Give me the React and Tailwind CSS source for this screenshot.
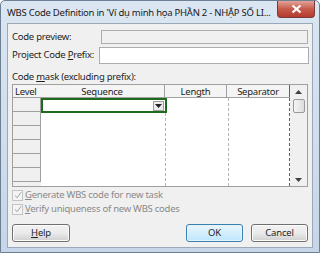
import React from "react";

const font = { fontFamily: '"Noto Sans", "Open Sans", sans-serif' };

function Btn({ children, primary, className = "" }) {
  return (
    <div
      className={
        "h-[18px] rounded-[3px] border flex items-center justify-center text-[9.5px] tracking-[-0.2px] text-[#1e1e1e] " +
        (primary
          ? "border-[#3c7fb1] bg-gradient-to-b from-[#eaf6fd] to-[#bee6fd] shadow-[inset_0_0_0_1px_#e5f4fc] "
          : "border-[#707070] bg-gradient-to-b from-[#f2f2f2] via-[#ebebeb] to-[#cfcfcf] shadow-[inset_0_0_0_1px_#fcfcfc] ") +
        className
      }
    >
      {children}
    </div>
  );
}

function Check({ u, rest }) {
  return (
    <div className="flex items-center h-[14px] text-[#8a8a8a] whitespace-nowrap">
      <div className="w-[11px] h-[11px] border border-[#c4c4c4] bg-[#f4f4f4] flex items-center justify-center mr-[2px]">
        <svg width="8" height="8" viewBox="0 0 9 9">
          <path d="M1 5 L3.5 7.5 L8 1.5" stroke="#a0a0a0" strokeWidth="1.1" fill="none" />
        </svg>
      </div>
      <span>
        <span className="underline">{u}</span>
        {rest}
      </span>
    </div>
  );
}

export default function App() {
  const rows = [0, 1, 2, 3, 4, 5];
  return (
    <div
      className="w-[320px] h-[253px] overflow-hidden flex flex-col bg-gradient-to-b from-[#dbe6f2] to-[#c6d6e8] border border-[#6d7f93] rounded-t-[5px] text-[9.5px] tracking-[-0.25px]"
      style={font}
    >
      {/* title bar */}
      <div className="h-[22px] flex items-start shrink-0">
        <div className="pl-[6px] pt-[5px] text-[#1a1a1a] whitespace-nowrap flex-1 min-w-0 overflow-hidden">
          WBS Code Definition in 'Ví dụ minh họa PHẦN 2 - NHẬP SỐ LI...
        </div>
        <div className="shrink-0 w-[38px] h-[17px] mr-[4px] rounded-b-[4px] border border-t-0 border-[#7b3b3b] bg-gradient-to-b from-[#e0a398] via-[#c75a4c] to-[#b33a2c] flex items-center justify-center">
          <svg width="11" height="10" viewBox="0 0 11 10">
            <path d="M1.5 1.5 L9.5 8.5 M9.5 1.5 L1.5 8.5" stroke="#fff" strokeWidth="2.2" />
          </svg>
        </div>
      </div>

      {/* client area */}
      <div className="mx-[6px] mb-[4px] flex-1 bg-[#f0f0f0] border border-[#9aa8b8] flex flex-col px-[4px] text-[#1e1e1e] whitespace-nowrap">
        <div className="flex items-center mt-[6px] h-[14px]">
          <span className="w-[85px]">Code preview:</span>
          <div className="flex-1 h-[14px] border border-[#adadad] bg-[#f0f0f0] ml-[4px]" />
        </div>
        <div className="flex items-center mt-[3px] h-[17px]">
          <span className="w-[83px]">
            Project Code <span className="underline">P</span>refix:
          </span>
          <div className="flex-1 h-[17px] border border-[#abadb3] bg-white ml-[4px] -mr-[1px]" />
        </div>
        <div className="mt-[6px] h-[14px] leading-[14px]">
          Code <span className="underline">m</span>ask (excluding prefix):
        </div>

        {/* grid */}
        <div className="h-[103px] border border-[#a0a0a0] bg-[#f0f0f0] flex">
          <div className="flex-1 flex flex-col">
            <div className="flex h-[13px] bg-[#f4f4f4] border-b border-[#a0a0a0] leading-[13px] text-[#1e1e1e]">
              <div className="w-[27px] pl-[2px]">Level</div>
              <div className="w-[125px] text-center border-r border-[#a0a0a0]">Sequence</div>
              <div className="w-[62px] text-center border-r border-[#a0a0a0]">Length</div>
              <div className="flex-1 text-center border-r border-[#606060]">Separator</div>
            </div>
            <div className="flex-1 flex">
              <div className="w-[28px] flex flex-col">
                {rows.map((r) => (
                  <div key={r} className="h-[14px] border-b border-r border-[#a0a0a0] bg-[#f0f0f0]" />
                ))}
              </div>
              <div className="w-[124px] bg-white relative">
                <div className="absolute left-0 top-0 w-[126px] h-[15px] border-2 border-[#1e6b1e] bg-white flex justify-end items-center pr-[1px] z-10">
                  <div className="w-[11px] h-[10px] border border-[#a0a0a0] bg-[#ececec] flex items-center justify-center">
                    <svg width="7" height="4" viewBox="0 0 7 4">
                      <path d="M0 0 H7 L3.5 4 Z" fill="#202020" />
                    </svg>
                  </div>
                </div>
              </div>
              <div className="w-[63px] bg-white border-l border-dashed border-[#b4b4b4]" />
              <div className="flex-1 bg-white border-l border-dashed border-[#b4b4b4] border-r border-r-[#606060]" />
            </div>
          </div>
          {/* scrollbar */}
          <div className="w-[17px] bg-[#f0f0f0] flex flex-col items-center">
            <div className="h-[13px] flex items-center justify-center">
              <svg width="7" height="4" viewBox="0 0 7 4">
                <path d="M0 4 H7 L3.5 0 Z" fill="#404040" />
              </svg>
            </div>
            <div className="w-[12px] h-[14px] mt-[1px] rounded-[2px] border border-[#9a9a9a] bg-gradient-to-r from-[#f5f5f5] to-[#dcdcdc]" />
            <div className="flex-1" />
            <div className="h-[13px] flex items-center justify-center">
              <svg width="7" height="4" viewBox="0 0 7 4">
                <path d="M0 0 H7 L3.5 4 Z" fill="#404040" />
              </svg>
            </div>
          </div>
        </div>

        <div className="mt-[1px] flex flex-col">
          <Check u="G" rest="enerate WBS code for new task" />
          <Check u="V" rest="erify uniqueness of new WBS codes" />
        </div>

        <div className="mt-[8px] flex">
          <Btn className="w-[58px]">
            <span className="underline">H</span>elp
          </Btn>
          <div className="flex-1" />
          <Btn primary className="w-[57px]">OK</Btn>
          <Btn className="w-[57px] ml-[8px]">Cancel</Btn>
        </div>
      </div>
    </div>
  );
}
